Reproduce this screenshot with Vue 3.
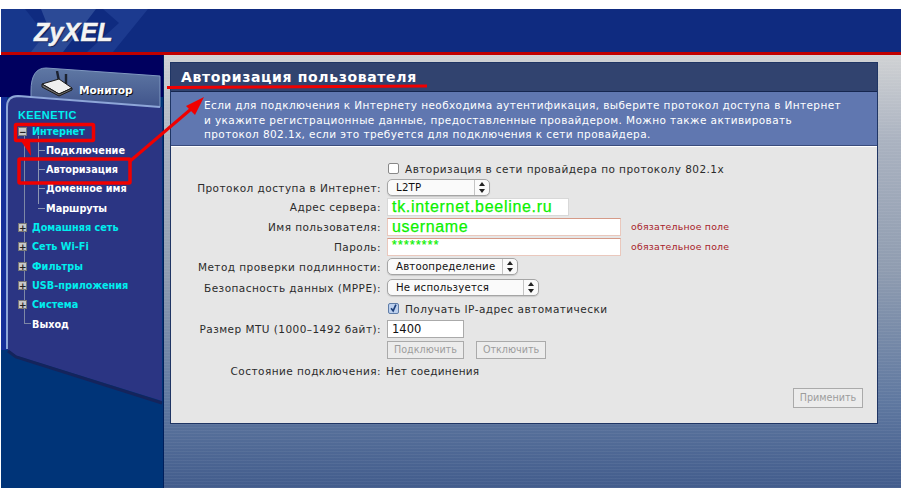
<script setup>
const menu = ['Домашняя сеть', 'Сеть Wi-Fi', 'Фильтры', 'USB-приложения', 'Система']
const subs = ['Подключение', 'Авторизация', 'Доменное имя', 'Маршруты']
</script>

<template>
  <div class="page">
    <header class="header">
      <svg class="hdr-deco" width="160" height="43" viewBox="0 0 160 43">
        <polygon points="0,0 24,0 58,43 0,43" fill="#17378c" />
        <polygon points="40,0 95,0 62,43 30,43 48,20" fill="#2c4a96" />
        <polygon points="102,0 147,0 112,43 86,43 118,14" fill="#1c3a8f" />
      </svg>
      <span class="logo">ZyXEL</span>
    </header>
    <div class="main">
      <aside class="side">
        <svg class="side-bg" width="163" height="433" viewBox="0 0 163 433">
          <defs>
            <linearGradient id="tabg" x1="0" y1="0" x2="0" y2="1">
              <stop offset="0" stop-color="#5f78a4" />
              <stop offset="1" stop-color="#3a4d86" />
            </linearGradient>
          </defs>
          <rect x="0" y="0" width="163" height="42" fill="#00005f" />
          <rect x="1" y="42" width="6" height="253" fill="#16309a" />
          <path d="M31 36 Q31 13 46 13 L160 21 L160 60 L31 60Z" fill="url(#tabg)" stroke="#7f98c0" stroke-width="1" />
          <path d="M6 52 Q6 40 18 40 L162 52 L162 346 L14 300 L6 293Z" fill="#2b3583" />
          <path d="M7 294 L7 52 Q7 41 18 41 L160 52" fill="none" stroke="#8ea6d8" stroke-width="2" />
          <path d="M8 296 L16 302 L162 348" fill="none" stroke="#14245c" stroke-width="3" />
        </svg>
        <div class="tab">
          <svg class="router" width="32" height="26" viewBox="0 0 32 26">
            <path d="M16 0 L18 10 M25 3 L25 13" stroke="#1c2230" stroke-width="2.4" fill="none" />
            <polygon points="1,13 18,8 31,17 18,23" fill="#efefef" stroke="#1a1a1a" stroke-width="1" />
            <path d="M1 13 L1 16 L18 25 L31 19 L31 17 L18 23Z" fill="#6e6e6e" stroke="#1a1a1a" stroke-width="1" />
          </svg>
          <span class="tab-text">Монитор</span>
        </div>
        <nav class="nav">
          <div class="brand">KEENETIC</div>
          <ul class="tree">
            <li class="item">
              <span class="box">−</span><span class="cyan">Интернет</span>
            </li>
            <li v-for="s in subs" :key="s" class="sub">{{ s }}</li>
            <li v-for="m in menu" :key="m" class="item">
              <span class="box">+</span><span class="cyan">{{ m }}</span>
            </li>
            <li class="item exit">Выход</li>
          </ul>
        </nav>
      </aside>
      <main class="content">
        <section class="panel">
          <h1 class="title">Авторизация пользователя</h1>
          <p class="desc">Если для подключения к Интернету необходима аутентификация, выберите протокол доступа в Интернет<br />и укажите регистрационные данные, предоставленные провайдером. Можно также активировать<br />протокол 802.1x, если это требуется для подключения к сети провайдера.</p>
          <form class="form" @submit.prevent>
            <div class="row r-1"><span class="lab"></span><label class="chk"><span class="cb"></span>Авторизация в сети провайдера по протоколу 802.1x</label></div>
            <div class="row"><span class="lab">Протокол доступа в Интернет:</span><span class="sel w-l2">L2TP<i class="arr"></i></span></div>
            <div class="row"><span class="lab">Адрес сервера:</span><span class="inp w-addr green big">tk.internet.beeline.ru</span></div>
            <div class="row"><span class="lab">Имя пользователя:</span><span class="inp w-req req green big2">username</span><span class="must">обязательное поле</span></div>
            <div class="row"><span class="lab">Пароль:</span><span class="inp w-req req green stars">********</span><span class="must">обязательное поле</span></div>
            <div class="row r-sel"><span class="lab">Метод проверки подлинности:</span><span class="sel w-auth">Автоопределение<i class="arr"></i></span></div>
            <div class="row r-sel"><span class="lab">Безопасность данных (MPPE):</span><span class="sel w-mppe">Не используется<i class="arr"></i></span></div>
            <div class="row r-sel"><span class="lab"></span><label class="chk"><span class="cb on"><svg width="13" height="13" viewBox="0 0 13 13"><path d="M3 6 L6 10 L10 1" fill="none" stroke="#1d3f7a" stroke-width="2.4" /></svg></span>Получать IP-адрес автоматически</label></div>
            <div class="row"><span class="lab">Размер MTU (1000–1492 байт):</span><span class="inp w-mtu">1400</span></div>
            <div class="row r-btn"><span class="lab"></span><span class="btn">Подключить</span><span class="btn b2">Отключить</span></div>
            <div class="row r-state"><span class="lab">Состояние подключения:</span><span class="state">Нет соединения</span></div>
            <div class="apply"><span class="btn">Применить</span></div>
          </form>
        </section>
      </main>
    </div>
    <svg class="marks" width="904" height="493" viewBox="0 0 904 493">
      <g fill="none" stroke="#f00000">
        <rect x="15.5" y="124.5" width="78" height="16" stroke-width="3.5" rx="1" />
        <rect x="19" y="159" width="111" height="24" stroke-width="3.5" rx="1" />
        <path d="M167 87.5 L427 86" stroke-width="3" />
        <path d="M129 162 L197 104" stroke-width="3" />
      </g>
      <polygon points="204,97 186,106 195,115" fill="#f00000" />
      <polygon points="21,141 30,141 31,156" fill="#f00000" />
    </svg>
  </div>
</template>

<style>
html, body { margin: 0; background: #fff; }
</style>

<style scoped>
.page {
  position: relative;
  width: 904px;
  height: 493px;
  padding: 9px 3px 5px 1px;
  box-sizing: border-box;
  overflow: hidden;
  font-family: "DejaVu Sans", Verdana, sans-serif;
  background: #fff;
}
.header {
  position: relative;
  height: 43px;
  border-bottom: 3px solid #c00000;
  background: #0f2b80;
  display: flex;
  align-items: center;
}
.hdr-deco { position: absolute; left: 0; top: 0; }
.logo {
  position: relative;
  margin: 4px 0 0 33px;
  font: italic 700 25px "Liberation Sans", Arial, sans-serif;
  letter-spacing: 0.2px;
  color: #f4f4f4;
  -webkit-text-stroke: 0.5px #f4f4f4;
  text-shadow: 1px 1px 1px #0a1c55;
}
.main { display: flex; height: 433px; }
.side {
  position: relative;
  width: 162px;
  flex: none;
  background: #003478;
  border-right: 1px solid #001f5c;
}
.side-bg { position: absolute; left: -1px; top: 0; }
.tab {
  position: relative;
  display: flex;
  align-items: center;
  height: 46px;
  padding: 14px 0 0 40px;
  box-sizing: border-box;
}
.router { margin-top: -3px; }
.tab-text {
  margin: 9px 0 0 6px;
  font: 700 10.6px "DejaVu Sans", sans-serif;
  color: #fff;
  text-shadow: 1px 1px 0 #111;
}
.nav { position: relative; padding: 6px 0 0 17px; }
.brand {
  font: 700 11px/16px "Liberation Sans", Arial, sans-serif;
  letter-spacing: 0.4px;
  color: #00f0f0;
}
.tree { list-style: none; margin: -1.5px 0 0; padding: 0; }
.tree::before {
  content: "";
  position: absolute;
  left: 23px;
  top: 29px;
  width: 1px;
  height: 193px;
  background: #7d87a6;
}
.tree::after {
  content: "";
  position: absolute;
  left: 37px;
  top: 35px;
  width: 1px;
  height: 68px;
  background: #8d96b2;
}
.item {
  position: relative;
  height: 19.3px;
  display: flex;
  align-items: center;
  font: 700 9.7px "DejaVu Sans", sans-serif;
}
.box {
  position: relative;
  width: 9px;
  height: 9px;
  margin-right: 5px;
  font: 700 9px/8px "DejaVu Sans", sans-serif;
  text-align: center;
  color: #222;
  background: #c8c8c8;
  border: 1px solid #777;
  flex: none;
  box-sizing: border-box;
}
.cyan { color: #00eeee; }
.sub {
  position: relative;
  height: 19.3px;
  padding-left: 28px;
  font: 700 9.7px/19.3px "DejaVu Sans", sans-serif;
  color: #fff;
}
.sub::before {
  content: "";
  position: absolute;
  left: 20px;
  top: 9px;
  width: 7px;
  height: 1px;
  background: #8d96b2;
}
.exit { color: #fff; padding-left: 14px; }
.exit::before {
  content: "";
  position: absolute;
  left: 6px;
  top: 9px;
  width: 7px;
  height: 1px;
  background: #7d87a6;
}
.content {
  flex: 1;
  padding: 7px 23px 0 6px;
  background:
    repeating-linear-gradient(rgba(255,255,255,0.05) 0 1px, transparent 1px 3px),
    linear-gradient(#d0d2d4 0, #aab2c0 20%, #8f9cb0 50%, #5f78a0 80%, #425c8c 100%);
}
.panel {
  width: 708px;
  height: 362px;
  box-sizing: border-box;
  border: 1px solid #1f3564;
  background: #e6e6e6;
  display: flex;
  flex-direction: column;
}
.title {
  margin: 0;
  height: 29px;
  padding: 0 0 0 10px;
  font: 700 14px/29px "DejaVu Sans", sans-serif;
  color: #fff;
  letter-spacing: 0.65px;
  background: #31436f;
  border-bottom: 1px solid #16264f;
  box-sizing: border-box;
}
.desc {
  margin: 0;
  height: 54px;
  box-sizing: border-box;
  padding: 6px 0 0 33px;
  font: 10.5px/14.5px "DejaVu Sans", sans-serif;
  letter-spacing: 0.4px;
  color: #fff;
  background: #6077b0;
  border-bottom: 1px solid #3a4c7c;
}
.form {
  position: relative;
  flex: 1;
  padding-top: 12px;
  border-top: 1px solid #fff;
  font: 10.5px "DejaVu Sans", sans-serif;
  letter-spacing: 0.45px;
  color: #2b2b2b;
}
.row { display: flex; align-items: center; height: 19.6px; }
.r-1 { height: 19px; }
.r-sel { height: 21px; }
.r-btn { height: 21.5px; }
.r-state { height: 22px; }
.lab { width: 210px; flex: none; text-align: right; margin-right: 6px; }
.chk { display: flex; align-items: center; margin-left: 1px; }
.cb {
  width: 11px;
  height: 11px;
  margin-right: 6px;
  box-sizing: border-box;
  border: 1px solid #888;
  border-radius: 2px;
  background: #fff;
  display: flex;
  align-items: center;
  justify-content: center;
}
.cb.on { background: #bcd0ee; border-color: #5f7da8; }
.sel {
  position: relative;
  height: 17px;
  box-sizing: border-box;
  padding-left: 8px;
  font-size: 10.2px;
  letter-spacing: 0.2px;
  line-height: 15px;
  color: #111;
  background: #fafafa;
  border: 1px solid #a5a5a5;
  border-radius: 5px;
  box-shadow: 0 1px 1px #c9c9c9;
}
.arr {
  position: absolute;
  right: 0;
  top: 0;
  bottom: 0;
  width: 14px;
  border-left: 1px solid #c4c4c4;
}
.arr::before, .arr::after {
  content: "";
  position: absolute;
  left: 4px;
  border-left: 3px solid transparent;
  border-right: 3px solid transparent;
}
.arr::before { top: 2px; border-bottom: 4px solid #222; }
.arr::after { bottom: 2px; border-top: 4px solid #222; }
.w-l2 { width: 103px; }
.w-auth { width: 131px; }
.w-mppe { width: 152px; }
.inp {
  height: 18px;
  box-sizing: border-box;
  padding: 0 4px;
  background: #fff;
  border: 1px solid #d8d8d8;
  line-height: 16px;
  color: #111;
}
.w-addr { width: 182px; }
.w-req { width: 234px; }
.w-mtu { width: 77px; border-color: #aaa; font-size: 11.5px; letter-spacing: 0; }
.req { border-color: #eac8bd; border-top-color: #d59a88; }
.green { color: #0cf000; -webkit-text-stroke: 0.25px #0cf000; }
.big { font: 16px/16px "Liberation Sans", Arial, sans-serif; letter-spacing: 0.7px; }
.big2 { font: 16px/16px "Liberation Sans", Arial, sans-serif; letter-spacing: 0.65px; }
.stars { font: 12px/13px "Liberation Sans", Arial, sans-serif; letter-spacing: 1.3px; }
.must { margin-left: 10px; color: #a8232a; font-size: 9.4px; letter-spacing: 0.2px; }
.btn {
  display: inline-block;
  height: 18px;
  box-sizing: border-box;
  padding: 0 6px;
  font-size: 9.6px;
  line-height: 16px;
  letter-spacing: 0;
  color: #9c9c9c;
  background: #ececec;
  border: 1px solid #aaa;
}
.b2 { margin-left: 12px; }
.state { margin-left: -1px; letter-spacing: 0.25px; }
.apply { position: absolute; right: 14px; bottom: 15px; }
.apply .btn { display: block; height: 20px; width: 70px; text-align: center; line-height: 18px; padding: 0; }
.marks { position: absolute; left: 0; top: 0; pointer-events: none; }
</style>
